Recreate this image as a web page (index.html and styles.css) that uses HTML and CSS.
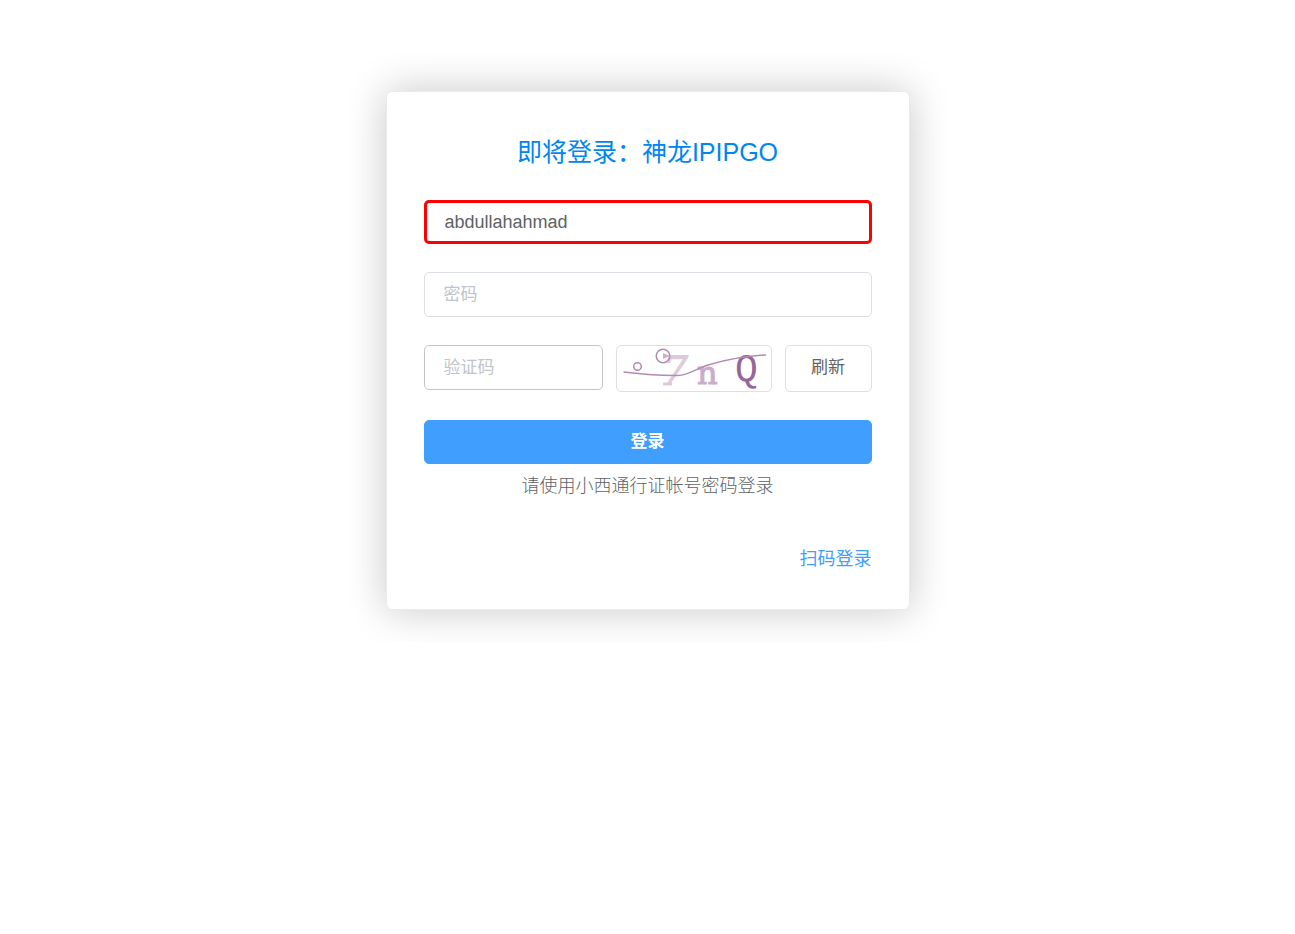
FILE: index.html
```html
<!DOCTYPE html>
<html lang="zh-CN">
<head>
<meta charset="utf-8">
<meta name="viewport" content="width=device-width, initial-scale=1">
<title>登录</title>
<link rel="stylesheet" href="styles.css">
</head>
<body>
<main class="card">
  <h1 class="title">即将登录：神龙IPIPGO</h1>
  <form class="form">
    <input class="field field-error" type="text" value="abdullahahmad" aria-label="帐号">
    <input class="field" type="password" placeholder="密码" aria-label="密码">
    <div class="captcha-row">
      <input class="field field-hover" type="text" placeholder="验证码" aria-label="验证码">
      <div class="captcha">
        <svg class="captcha-image" viewBox="0 0 154 45" role="img" aria-label="验证码图片">
          <g class="captcha-text">
            <text class="glyph-seven" transform="translate(42 38) skewX(-14)">7</text>
            <text class="glyph-n" x="80" y="38">n</text>
            <text class="glyph-q" x="118" y="35">Q</text>
          </g>
          <path class="captcha-foot" d="M46 38h9"/>
          <g class="captcha-noise">
            <path d="M6.500 26C24 28 42 30 61 29.500C72 29 78 23 91 19C108 14 127 10 149 9"/>
            <circle cx="20.500" cy="20.500" r="3.800"/>
            <circle cx="46" cy="10" r="6.800"/>
          </g>
          <path class="captcha-mark" d="M46 7l7 3-7 3z"/>
        </svg>
      </div>
      <button class="refresh" type="button">刷新</button>
    </div>
    <button class="submit" type="submit">登录</button>
  </form>
  <p class="note">请使用小西通行证帐号密码登录</p>
  <a class="scan" href="#scan">扫码登录</a>
</main>
</body>
</html>
```
FILE: styles.css
```css
* {
  box-sizing: border-box;
}

body {
  margin: 0;
  padding: 91px 16px 32px;
  background: #fff;
  font-family: "Liberation Sans", "Noto Sans CJK SC", sans-serif;
  font-size: 18px;
}

.card {
  display: flex;
  flex-direction: column;
  width: 100%;
  max-width: 524px;
  margin: 0 auto;
  padding: 44px 37px 36px;
  border: 1px solid #ebebeb;
  border-radius: 6px;
  background: #fff;
  box-shadow: 0 0 40px #cac6c6;
}

.title {
  margin: 0 0 32px;
  color: #0086f1;
  font-size: 25px;
  font-weight: 400;
  line-height: 32px;
  text-align: center;
}

.form {
  display: grid;
  gap: 28px;
}

.field,
.refresh,
.submit {
  width: 100%;
  min-width: 0;
  border: 1px solid #dcdfe6;
  border-radius: 5px;
  background: #fff;
  color: #606266;
  font-family: inherit;
  font-size: 17px;
  outline: none;
}

.field {
  height: 45px;
  padding: 0 19px;
}

.field::placeholder {
  color: #c0c4cc;
  opacity: 1;
}

.field-error {
  height: 44px;
  border: 3px solid #f00;
  padding: 0 18px;
  font-size: 18px;
}

.field-hover {
  border-color: #c0c4cc;
}

.captcha-row {
  display: grid;
  grid-template-columns: 179fr 156fr 87fr;
  align-items: start;
  gap: 13px;
}

.captcha {
  height: 47px;
  border: 1px solid #dcdfe6;
  border-radius: 5px;
}

.captcha-image {
  display: block;
  width: 100%;
  height: 100%;
  overflow: visible;
}

.captcha-text {
  font-family: "DejaVu Serif", serif;
}

.glyph-seven {
  fill: #dccbdc;
  stroke: #dccbdc;
  font-size: 39px;
}

.glyph-n {
  fill: #c9adc9;
  stroke: #c9adc9;
  font-size: 32px;
}

.glyph-q {
  fill: #96659a;
  font-family: "Liberation Mono", monospace;
  font-size: 38px;
}

.captcha-foot {
  stroke: #dccbdc;
  stroke-width: 3;
}

.captcha-noise {
  fill: none;
  stroke: #b48ab4;
  stroke-width: 1.500;
}

.captcha-mark {
  fill: #cdb0cd;
}

.refresh {
  height: 47px;
  padding: 0 0 7px;
  cursor: pointer;
}

.submit {
  height: 44px;
  padding: 0 0 6px;
  border-color: #409eff;
  background: #409eff;
  color: #fff;
  font-weight: 700;
  cursor: pointer;
}

.note {
  margin: 8px 0 45px;
  color: #606266;
  font-weight: 300;
  line-height: 28px;
  text-align: center;
}

.scan {
  align-self: flex-end;
  color: #409eff;
  line-height: 28px;
  text-decoration: none;
}
```
